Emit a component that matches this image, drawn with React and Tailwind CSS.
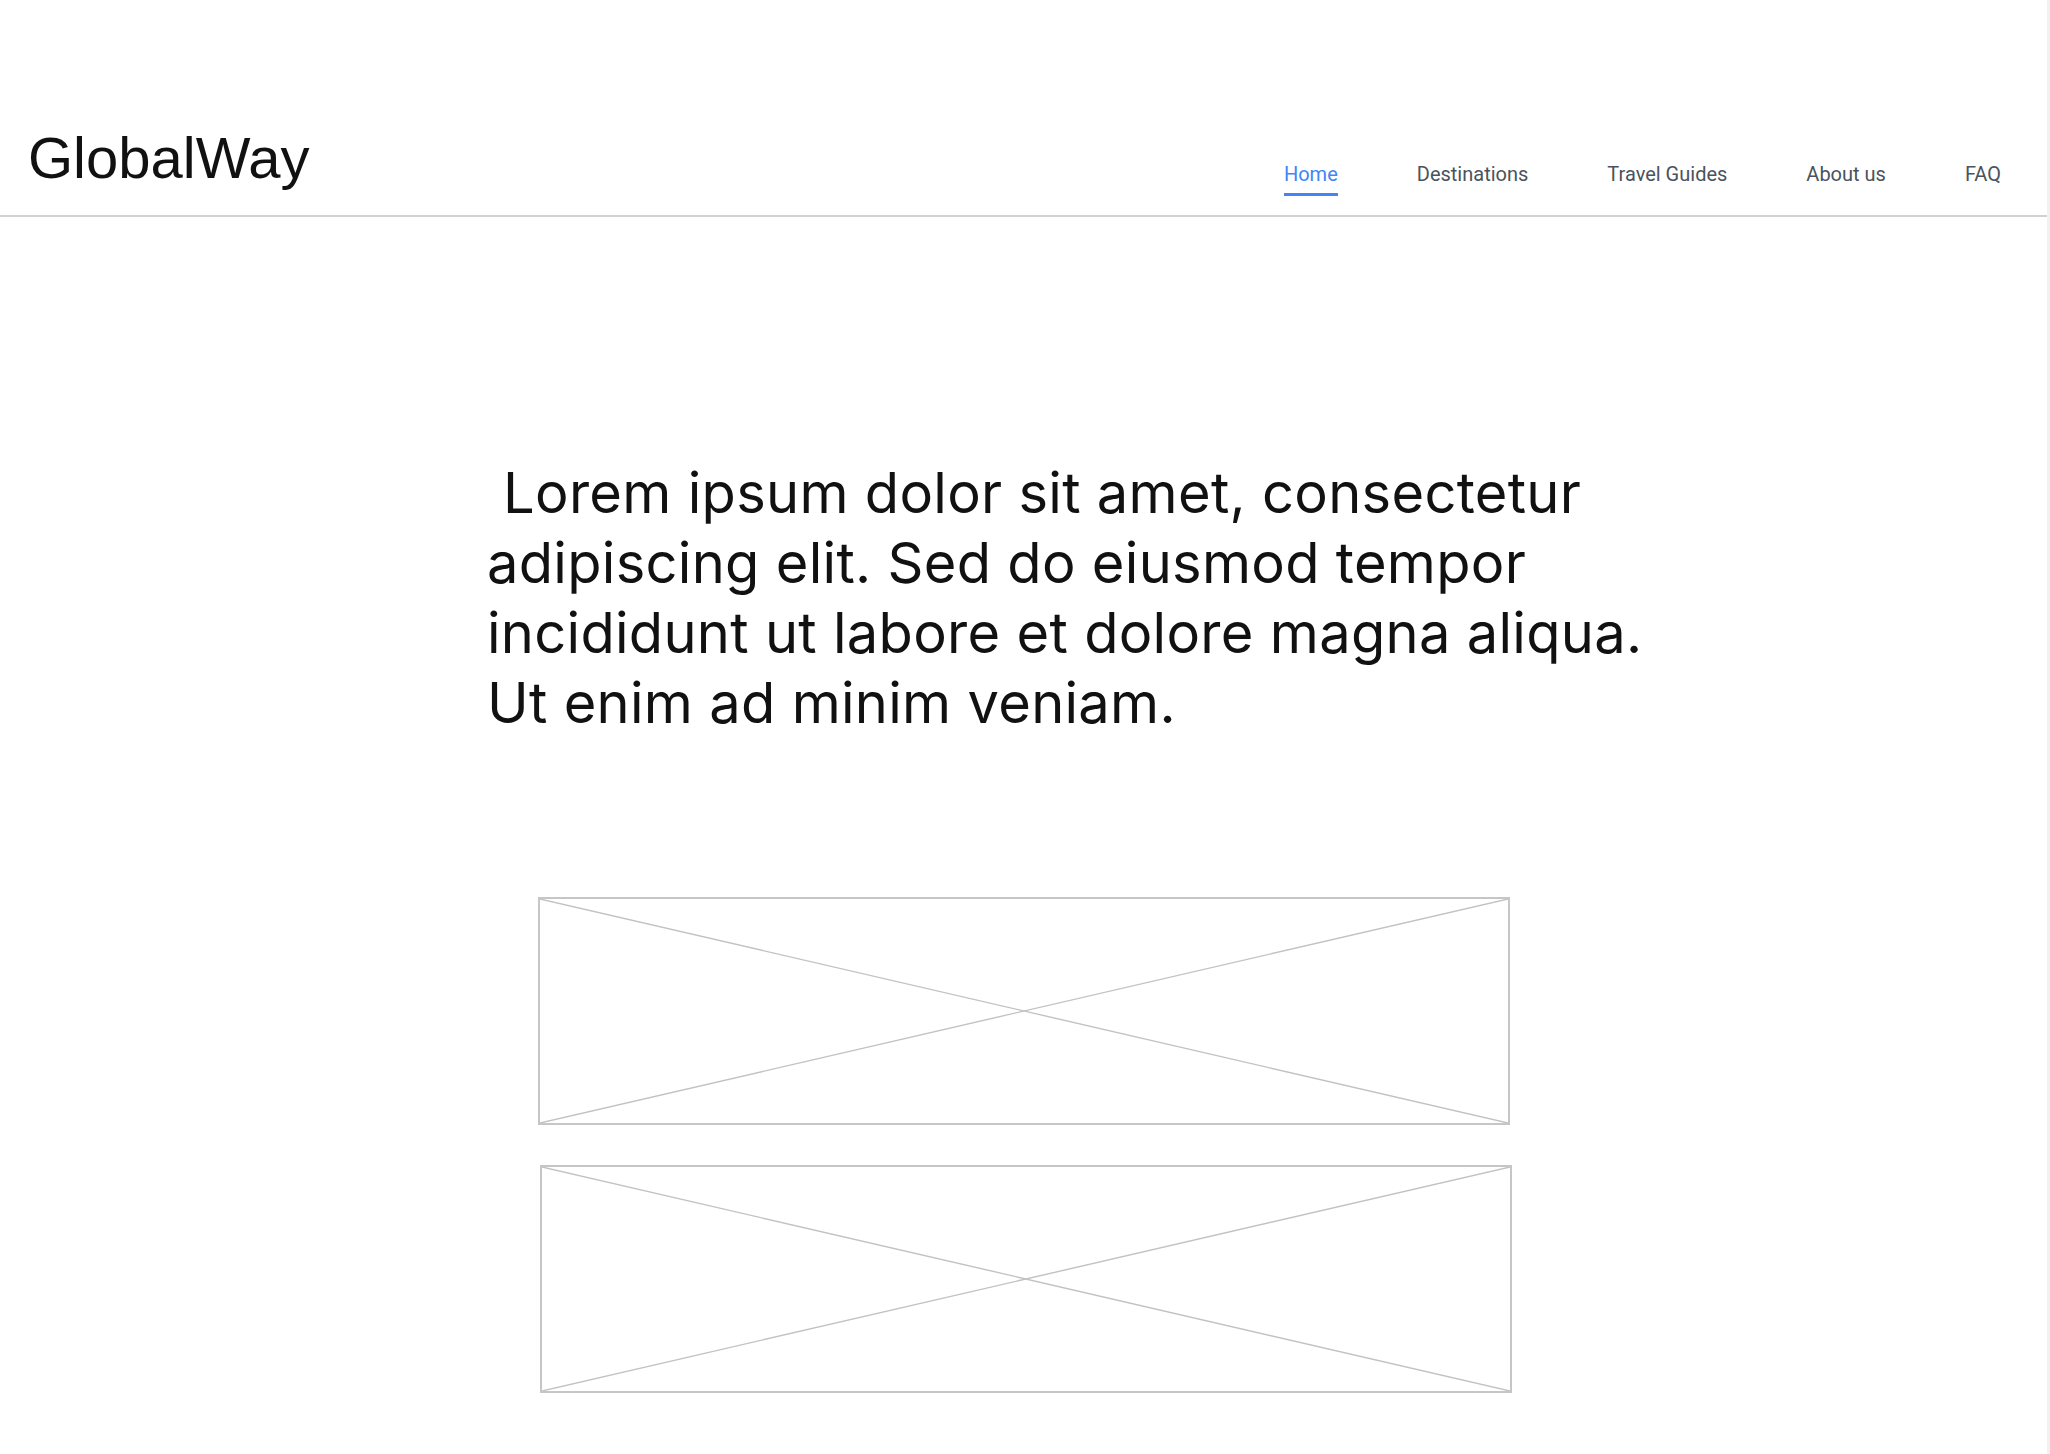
const navItems = ["Home", "Destinations", "Travel Guides", "About us", "FAQ"];

function Placeholder({ className = "" }) {
  return (
    <div className={`relative h-[228px] w-[972px] border-2 border-[#c6c6c6] ${className}`}>
      <svg
        className="absolute inset-0 h-full w-full"
        viewBox="0 0 100 100"
        preserveAspectRatio="none"
      >
        <line x1="0" y1="0" x2="100" y2="100" stroke="#c2c2c2" strokeWidth="1.4" vectorEffect="non-scaling-stroke" />
        <line x1="100" y1="0" x2="0" y2="100" stroke="#c2c2c2" strokeWidth="1.4" vectorEffect="non-scaling-stroke" />
      </svg>
    </div>
  );
}

export default function App() {
  return (
    <div className="flex min-h-screen bg-white">
      <div className="flex-1">
        <header className="flex h-[217px] items-end justify-between border-b-2 border-[#d2d2d2]">
          <h1 className="pb-[28px] pl-[28px] font-['Liberation_Sans',Arial,sans-serif] text-[58px] leading-[58px] text-[#111]">
            GlobalWay
          </h1>
          <nav className="flex gap-[79px] pb-[19px] pr-[46px] font-['Roboto',sans-serif] text-[20px]">
            {navItems.map((item, i) => (
              <a key={item} href="#" className="flex flex-col gap-[7px]">
                <span className={`leading-[24px] ${i === 0 ? "text-[#4285f4]" : "text-[#4a535d]"}`}>{item}</span>
                <span className={`h-[3px] ${i === 0 ? "bg-[#4285f4]" : "bg-transparent"}`} />
              </a>
            ))}
          </nav>
        </header>

        <main className="flex flex-col">
          <p className="ml-[487px] mt-[241px] font-['Inter',sans-serif] text-[56px] leading-[70px] tracking-[0.3px] text-[#111]">
            {"\u00a0"}Lorem ipsum dolor sit amet, consectetur
            <br />
            adipiscing elit. Sed do eiusmod tempor
            <br />
            incididunt ut labore et dolore magna aliqua.
            <br />
            Ut enim ad minim veniam.
          </p>

          <div className="mt-[159px] flex flex-col items-center gap-[40px] pb-[60px]">
            <Placeholder />
            <Placeholder className="ml-[5px]" />
          </div>
        </main>
      </div>
      <div className="w-[3px] bg-[#f1f1f1]" />
    </div>
  );
}
